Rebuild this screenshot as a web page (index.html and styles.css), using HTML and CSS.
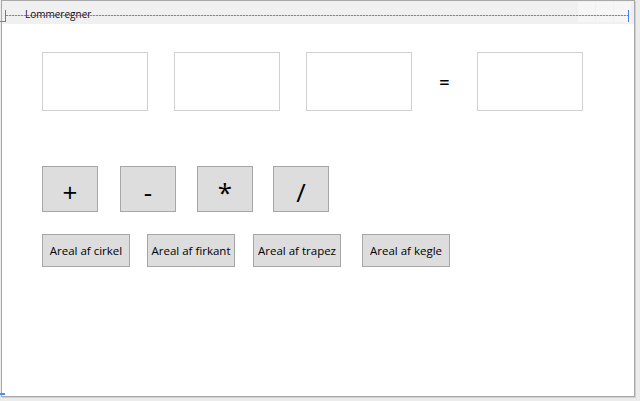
FILE: index.html
```html
<!DOCTYPE html>
<html lang="da">
<head>
<meta charset="utf-8">
<title>Lommeregner</title>
<link rel="stylesheet" href="styles.css">
</head>
<body>
<div class="stage">
  <div class="window">
    <div class="titlebar">
      <span class="title">Lommeregner</span>
      <div class="caption-btns"><span></span><span></span><span></span></div>
    </div>
    <div class="client">
      <div class="row inputs">
        <div class="textbox"></div>
        <div class="textbox"></div>
        <div class="textbox"></div>
        <div class="eq">=</div>
        <div class="textbox"></div>
      </div>
      <div class="row ops">
        <button class="btn op">+</button>
        <button class="btn op">-</button>
        <button class="btn op">*</button>
        <button class="btn op">/</button>
      </div>
      <div class="row areas">
        <button class="btn area">Areal af cirkel</button>
        <button class="btn area">Areal af firkant</button>
        <button class="btn area">Areal af trapez</button>
        <button class="btn area">Areal af kegle</button>
      </div>
    </div>
  </div>
  <div class="adorner dotline"></div>
  <div class="adorner tick tick-left"></div>
  <div class="adorner tick tick-right"></div>
  <div class="adorner hmark hmark-top"></div>
  <div class="adorner hmark hmark-bottom"></div>
</div>
</body>
</html>
```

FILE: styles.css
```css
html, body {
  margin: 0;
  padding: 0;
}
body {
  width: 640px;
  height: 401px;
  overflow: hidden;
  background: #ececec;
  font-family: "Open Sans", "Noto Sans", sans-serif;
  color: #000;
}
.stage {
  position: relative;
  width: 640px;
  height: 401px;
  background: #ececec;
}
.window {
  margin-left: 1px;
  width: 634px;
  height: 397px;
  box-sizing: border-box;
  border: 1px solid #a9a9a9;
  box-shadow: 1px 1px 0 #cfcfcf;
  display: flex;
  flex-direction: column;
  background: #fff;
}
.titlebar {
  height: 23px;
  flex: none;
  background: #f0f0f0;
  display: flex;
  align-items: flex-start;
  padding: 0 3px 0 23px;
}
.title {
  position: relative;
  z-index: 2;
  font-size: 10px;
  line-height: 14px;
  margin-top: 6px;
  color: #120c24;
}
.caption-btns {
  margin-left: auto;
  margin-top: 1px;
  display: flex;
  gap: 1px;
}
.caption-btns span {
  width: 17px;
  height: 20px;
  background: #f6f6f6;
}
.client {
  flex: 1;
  background: #fff;
  padding: 28px 0 0 40px;
}
.row {
  display: flex;
}
.inputs {
  height: 59px;
}
.textbox {
  width: 106px;
  height: 59px;
  box-sizing: border-box;
  border: 1px solid #d0d0d0;
  background: #fff;
}
.textbox + .textbox {
  margin-left: 26px;
}
.eq {
  width: 65px;
  text-align: center;
  font-size: 18px;
  font-weight: 600;
  line-height: 60px;
}
.btn {
  box-sizing: border-box;
  border: 1px solid #a6a6a6;
  background: #dddddd;
  color: #000;
  font-family: "Open Sans", "Noto Sans", sans-serif;
  margin: 0;
  padding: 0;
}
.ops {
  margin-top: 55px;
}
.op {
  width: 56px;
  height: 46px;
  font-size: 26px;
  line-height: normal;
  padding-top: 6px;
}
.op:nth-child(2) { margin-left: 22px; }
.op:nth-child(3) { margin-left: 21px; }
.op:nth-child(4) { margin-left: 20px; }
.areas {
  margin-top: 22px;
}
.area {
  width: 88px;
  height: 33px;
  font-size: 11.5px;
  line-height: normal;
}
.area:nth-child(2) { margin-left: 17px; }
.area:nth-child(3) { margin-left: 18px; }
.area:nth-child(4) { margin-left: 21px; }

.adorner {
  position: absolute;
  z-index: 1;
}
.dotline {
  left: 6px;
  top: 15px;
  width: 622px;
  height: 1px;
  background: repeating-linear-gradient(90deg, #5a8de8 0 2px, #c3d3ee 2px 3px);
}
.tick {
  top: 10px;
  width: 1px;
  height: 12px;
  background: #3f7ff0;
}
.tick-left { left: 5px; }
.tick-right { left: 628px; }
.hmark {
  left: 0;
  width: 5px;
  height: 1px;
  background: #4f8bf2;
}
.hmark-top { top: 21px; }
.hmark-bottom { top: 393px; height: 2px; }
```
